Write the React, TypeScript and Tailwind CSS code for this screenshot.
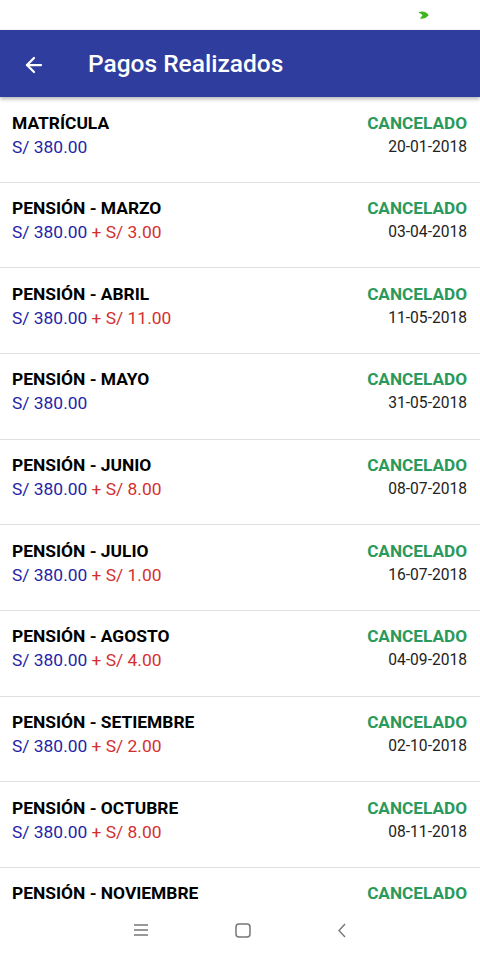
import { ArrowLeft } from "lucide-react"

type Pago = {
	concepto: string
	extra?: string
	fecha: string
}

const pagos: Pago[] = [
	{ concepto: "MATRÍCULA", fecha: "20-01-2018" },
	{ concepto: "PENSIÓN - MARZO", extra: "S/ 3.00", fecha: "03-04-2018" },
	{ concepto: "PENSIÓN - ABRIL", extra: "S/ 11.00", fecha: "11-05-2018" },
	{ concepto: "PENSIÓN - MAYO", fecha: "31-05-2018" },
	{ concepto: "PENSIÓN - JUNIO", extra: "S/ 8.00", fecha: "08-07-2018" },
	{ concepto: "PENSIÓN - JULIO", extra: "S/ 1.00", fecha: "16-07-2018" },
	{ concepto: "PENSIÓN - AGOSTO", extra: "S/ 4.00", fecha: "04-09-2018" },
	{ concepto: "PENSIÓN - SETIEMBRE", extra: "S/ 2.00", fecha: "02-10-2018" },
	{ concepto: "PENSIÓN - OCTUBRE", extra: "S/ 8.00", fecha: "08-11-2018" },
	{ concepto: "PENSIÓN - NOVIEMBRE", extra: "S/ 1.00", fecha: "05-12-2018" },
]

const PagoItem = ({ pago }: { pago: Pago }) => (
	<div className="flex shrink-0 justify-between h-[85.67px] border-b border-[#e0e0e0] pl-[12px] pr-[13px] pt-[15.5px]">
		<div>
			<p className="text-[17.4px] leading-[21px] font-bold text-black">{pago.concepto}</p>
			<p className="mt-[3px] text-[17.4px] leading-[21px]">
				<span className="text-[#2424a6]">S/ 380.00</span>
				{pago.extra && (
					<>
						<span className="text-[#d32f2f]"> + </span>
						<span className="text-[#d32f2f]">{pago.extra}</span>
					</>
				)}
			</p>
		</div>
		<div className="flex flex-col items-end">
			<p className="text-[17.2px] leading-[21px] font-bold text-[#2a9a5c]">CANCELADO</p>
			<p className="mt-[3px] text-[15.6px] leading-[21px] text-[#222]">{pago.fecha}</p>
		</div>
	</div>
)

export default function App() {
	return (
		<div className="flex flex-col h-[960px] w-[480px] overflow-hidden bg-white font-['Roboto',sans-serif]">
			<div className="flex h-[30px] shrink-0 items-center justify-end pr-[51px]">
				<svg width="11" height="8" viewBox="0 0 11 8">
					<path d="M0.5 1.5 Q4 -0.5 8 1.5 Q11 3.5 10.5 4.5 Q7 8.5 2 7.5 Q4 5 4.5 4 Q3 2.5 0.5 1.5 Z" fill="#3fb61e" />
				</svg>
			</div>
			<div className="relative z-10 flex h-[67px] shrink-0 items-center bg-[#2f3e9e] pt-[2px] shadow-[0_2px_4px_rgba(0,0,0,0.3)]">
				<ArrowLeft className="ml-[22px] h-[24px] w-[24px] text-white" strokeWidth={2.25} />
				<h1 className="ml-[42px] text-[24.5px] font-medium text-white">Pagos Realizados</h1>
			</div>
			<div className="flex flex-1 flex-col overflow-hidden">
				{pagos.map((p) => (
					<PagoItem key={p.concepto} pago={p} />
				))}
			</div>
			<div className="flex h-[56px] shrink-0 items-start justify-center gap-[86px] bg-white pt-[19px]">
				<svg width="16" height="14" viewBox="0 0 16 14">
					<path d="M1 2h14M1 7h14M1 12h14" stroke="#777" strokeWidth="1.4" />
				</svg>
				<svg width="16" height="15" viewBox="0 0 16 15">
					<rect x="1" y="1" width="14" height="13" rx="3" fill="none" stroke="#777" strokeWidth="1.5" />
				</svg>
				<svg width="10" height="15" viewBox="0 0 10 15">
					<path d="M8 1 L2 7.5 L8 14" fill="none" stroke="#777" strokeWidth="1.4" />
				</svg>
			</div>
		</div>
	)
}
